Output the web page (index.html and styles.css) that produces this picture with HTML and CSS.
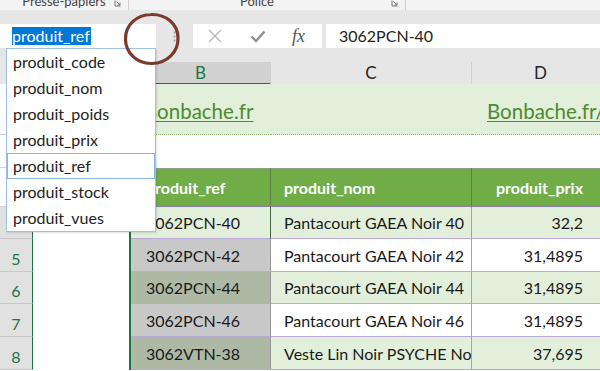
FILE: index.html
```html
<!DOCTYPE html>
<html lang="fr">
<head>
    <meta charset="UTF-8">
    <title>produit_ref - Excel</title>
    <link rel="stylesheet" href="styles.css">
</head>
<body>
    <!-- bas du ruban -->
    <div class="ribbon">
        <div class="group group-clip">
            <span class="group-label">Presse-papiers</span>
            <svg class="launcher" width="7" height="7" viewBox="0 0 7 7"><path d="M1 0.5v5.5h5.5M2.5 1.5l3.5 3.5M6 2.5v2.5h-2.5" fill="none" stroke="#777" stroke-width="1"/></svg>
        </div>
        <div class="group group-font">
            <span class="group-label">Police</span>
            <svg class="launcher" width="7" height="7" viewBox="0 0 7 7"><path d="M1 0.5v5.5h5.5M2.5 1.5l3.5 3.5M6 2.5v2.5h-2.5" fill="none" stroke="#777" stroke-width="1"/></svg>
        </div>
        <div class="group group-rest"></div>
    </div>

    <!-- barre de formule -->
    <div class="fbar">
        <div class="namebox"><span class="name-sel">produit_ref</span></div>
        <div class="grip">
            <svg width="3" height="11" viewBox="0 0 3 11"><circle cx="1.5" cy="1.5" r="1" fill="#9a9a9a"/><circle cx="1.5" cy="5.5" r="1" fill="#9a9a9a"/><circle cx="1.5" cy="9.5" r="1" fill="#9a9a9a"/></svg>
        </div>
        <div class="fbtns">
            <svg class="btn-x" width="14" height="14" viewBox="0 0 14 14"><path d="M1 1L13 13M13 1L1 13" stroke="#b5b5b5" stroke-width="1.3"/></svg>
            <svg class="btn-ok" width="16" height="13" viewBox="0 0 16 13"><path d="M1.5 6.5L6 11L14.5 1.5" fill="none" stroke="#8e8e8e" stroke-width="2.4"/></svg>
            <span class="btn-fx">fx</span>
        </div>
        <div class="finput">3062PCN-40</div>
    </div>

    <!-- en-têtes de colonnes -->
    <div class="colhdr">
        <div class="ch ch-corner"></div>
        <div class="ch"></div>
        <div class="ch ch-sel">B</div>
        <div class="ch">C</div>
        <div class="ch">D</div>
    </div>

    <!-- feuille (lignes 1 à 4 en partie cachées par la liste) -->
    <div class="sheet">
        <div class="row r-title">
            <div class="rh"></div>
            <div class="cell"></div>
            <div class="cell"><span class="link">Bonbache.fr</span></div>
            <div class="cell"></div>
            <div class="cell"><span class="link">Bonbache.fr/</span></div>
        </div>
        <div class="row r-gap">
            <div class="rh"></div>
            <div class="cell"></div>
            <div class="cell"></div>
            <div class="cell"></div>
            <div class="cell"></div>
        </div>
        <div class="row r-head">
            <div class="rh"></div>
            <div class="cell"></div>
            <div class="cell th">produit_ref</div>
            <div class="cell th">produit_nom</div>
            <div class="cell th num">produit_prix</div>
        </div>
        <div class="row r-data band h32">
            <div class="rh sel"></div>
            <div class="cell col-a"></div>
            <div class="cell ref active">3062PCN-40</div>
            <div class="cell">Pantacourt GAEA Noir 40</div>
            <div class="cell num">32,2</div>
        </div>
        <div class="row r-data h33">
            <div class="rh sel">5</div>
            <div class="cell col-a"></div>
            <div class="cell ref">3062PCN-42</div>
            <div class="cell">Pantacourt GAEA Noir 42</div>
            <div class="cell num">31,4895</div>
        </div>
        <div class="row r-data band h32">
            <div class="rh sel">6</div>
            <div class="cell col-a"></div>
            <div class="cell ref">3062PCN-44</div>
            <div class="cell">Pantacourt GAEA Noir 44</div>
            <div class="cell num">31,4895</div>
        </div>
        <div class="row r-data h33">
            <div class="rh sel">7</div>
            <div class="cell col-a"></div>
            <div class="cell ref">3062PCN-46</div>
            <div class="cell">Pantacourt GAEA Noir 46</div>
            <div class="cell num">31,4895</div>
        </div>
        <div class="row r-data band h33">
            <div class="rh sel">8</div>
            <div class="cell col-a"></div>
            <div class="cell ref">3062VTN-38</div>
            <div class="cell clip">Veste Lin Noir PSYCHE Noir</div>
            <div class="cell num">37,695</div>
        </div>
    </div>

    <!-- liste des noms ouverte sous la zone Nom -->
    <ul class="names">
        <li>produit_code</li>
        <li>produit_nom</li>
        <li>produit_poids</li>
        <li>produit_prix</li>
        <li class="current">produit_ref</li>
        <li>produit_stock</li>
        <li>produit_vues</li>
    </ul>

    <!-- cercle d'annotation -->
    <svg class="mark" width="60" height="56" viewBox="0 0 60 56">
        <path d="M29 3.5C44 3 56 13 56 27C56.5 41 45 52 30 52.5C15 53 3.5 42 3.5 28C3.5 14 14 4 29.5 3.5" fill="none" stroke="#7a3a2c" stroke-width="3.2"/>
    </svg>
</body>
</html>
```

FILE: styles.css
```css
body {
    margin: 0;
    width: 600px;
    height: 371px;
    overflow: hidden;
    position: relative;
    background: #ffffff;
    font-family: Lato, "Liberation Sans", sans-serif;
    color: #1a1a1a;
}

/* ruban */
.ribbon {
    height: 10px;
    display: flex;
    overflow: hidden;
    background: #f3f3f3;
}
.group {
    display: flex;
    justify-content: center;
    position: relative;
    border-right: 1px solid #d0d0d0;
}
.group-clip {
    width: 128px;
}
.group-font {
    width: 276px;
}
.group-rest {
    flex: 1;
    border-right: none;
}
.group-label {
    font-size: 13px;
    line-height: 13px;
    margin-top: -5px;
    color: #444;
    white-space: nowrap;
}
.group-font .group-label {
    margin-right: 20px;
}
.launcher {
    position: absolute;
    right: 7px;
    top: 0;
}

/* barre de formule */
.fbar {
    height: 52px;
    box-sizing: border-box;
    padding-top: 14px;
    display: flex;
    align-items: flex-start;
    background: #e6e6e6;
}
.namebox {
    width: 156px;
    height: 24px;
    background: #fff;
    display: flex;
    align-items: center;
    padding-left: 12px;
    box-sizing: border-box;
}
.name-sel {
    background: #0078d7;
    color: #fff;
    font-size: 16px;
    line-height: 18px;
    padding: 0 1px 0 0;
}
.grip {
    width: 37px;
    height: 24px;
    display: flex;
    align-items: center;
    justify-content: center;
}
.fbtns {
    width: 129px;
    height: 24px;
    background: #fff;
    display: flex;
    align-items: center;
}
.btn-x {
    margin-left: 15px;
}
.btn-ok {
    margin-left: 28px;
}
.btn-fx {
    margin-left: 26px;
    font-family: "Liberation Serif", serif;
    font-style: italic;
    font-size: 18px;
    color: #555;
}
.finput {
    flex: 1;
    height: 24px;
    margin-left: 4px;
    background: #fff;
    padding-left: 13px;
    font-size: 16px;
    line-height: 24px;
    color: #222;
}

/* en-têtes de colonnes */
.colhdr,
.row {
    display: grid;
    grid-template-columns: 33px 98px 140px 201px 138px;
}
.colhdr {
    height: 22px;
    background: #e6e6e6;
}
.ch {
    box-sizing: border-box;
    border-right: 1px solid #cfcfcf;
    border-bottom: 1px solid #cfcfcf;
    text-align: center;
    font-size: 17px;
    line-height: 21px;
    color: #262626;
}
.ch-sel {
    background: #d2d2d2;
    color: #217346;
    border-bottom: 2px solid #217346;
}

/* feuille */
.row > div {
    box-sizing: border-box;
    min-width: 0;
}
.rh {
    background: #fff;
    border-right: 1px solid #d4d4d4;
    border-bottom: 1px solid #d4d4d4;
    text-align: center;
    font-size: 16px;
    color: #444;
}
.rh.sel {
    background: #e1e1e1;
    color: #217346;
    border-right: 1px solid #217346;
    border-bottom: 1px solid #c8c8c8;
    display: flex;
    align-items: flex-end;
    justify-content: center;
    padding-bottom: 3px;
}
.cell {
    display: flex;
    align-items: center;
    font-size: 16px;
    white-space: nowrap;
}

.r-title {
    height: 51px;
}
.r-title .cell {
    background: #e2efda;
    border-bottom: 1px dotted #8fb873;
    overflow: visible;
}
.r-title .cell:nth-child(3),
.r-title .cell:nth-child(5) {
    padding-left: 13px;
    padding-top: 4px;
}
.r-title .cell:nth-child(5) {
    padding-left: 15px;
}
.link {
    font-size: 20.5px;
    color: #4e8a2f;
    text-decoration: underline;
    text-underline-offset: 2px;
    text-decoration-thickness: 1px;
}

.r-gap {
    height: 33px;
}

.r-head {
    height: 39px;
}
.th {
    background: #70ad47;
    color: #fff;
    font-weight: bold;
    padding-left: 13px;
    border-top: 1px solid #8aa07a;
    border-bottom: 1px solid #8b7fa8;
}
.r-head .th:nth-child(3),
.r-head .th:nth-child(4) {
    border-right: 1px solid #5d7f49;
}
.r-head .th:nth-child(3) {
    padding-left: 15px;
}

.h32 {
    height: 32px;
}
.h33 {
    height: 33px;
}
.r-data .cell {
    border-bottom: 1px solid #b9aad6;
    padding-left: 13px;
}
.r-data .col-a {
    border-bottom: none;
    border-right: 2px solid #217346;
}
.r-data .ref {
    padding-left: 15px;
    background: #c8c8c8;
    border-right: 1px solid #969696;
}
.r-data.band .ref {
    background: #adb9a5;
}
.r-data .ref.active {
    background: #e2efda;
    border-right-color: #3f6a35;
}
.r-data .cell:nth-child(4) {
    border-right: 1px solid #a99cc8;
}
.r-data.band .cell:nth-child(4),
.r-data.band .cell:nth-child(5) {
    background: #e2efda;
}
.num {
    justify-content: flex-end;
    padding-right: 27px;
}
.r-data .num {
    padding-left: 0;
}
.clip {
    overflow: hidden;
}

/* liste des noms */
.names {
    position: absolute;
    left: 6px;
    top: 48px;
    width: 150px;
    margin: 0;
    padding: 0;
    list-style: none;
    background: #fff;
    border: 1px solid #9fc2e4;
    box-sizing: border-box;
    box-shadow: 1px 1px 2px rgba(0, 0, 0, 0.12);
}
.names li {
    height: 26px;
    line-height: 26px;
    padding-left: 6px;
    font-size: 16px;
    color: #222;
    box-sizing: border-box;
}
.names li.current {
    border: 1px solid #84b6e8;
    line-height: 24px;
    padding-left: 5px;
}

/* annotation */
.mark {
    position: absolute;
    left: 122px;
    top: 11px;
}
```
